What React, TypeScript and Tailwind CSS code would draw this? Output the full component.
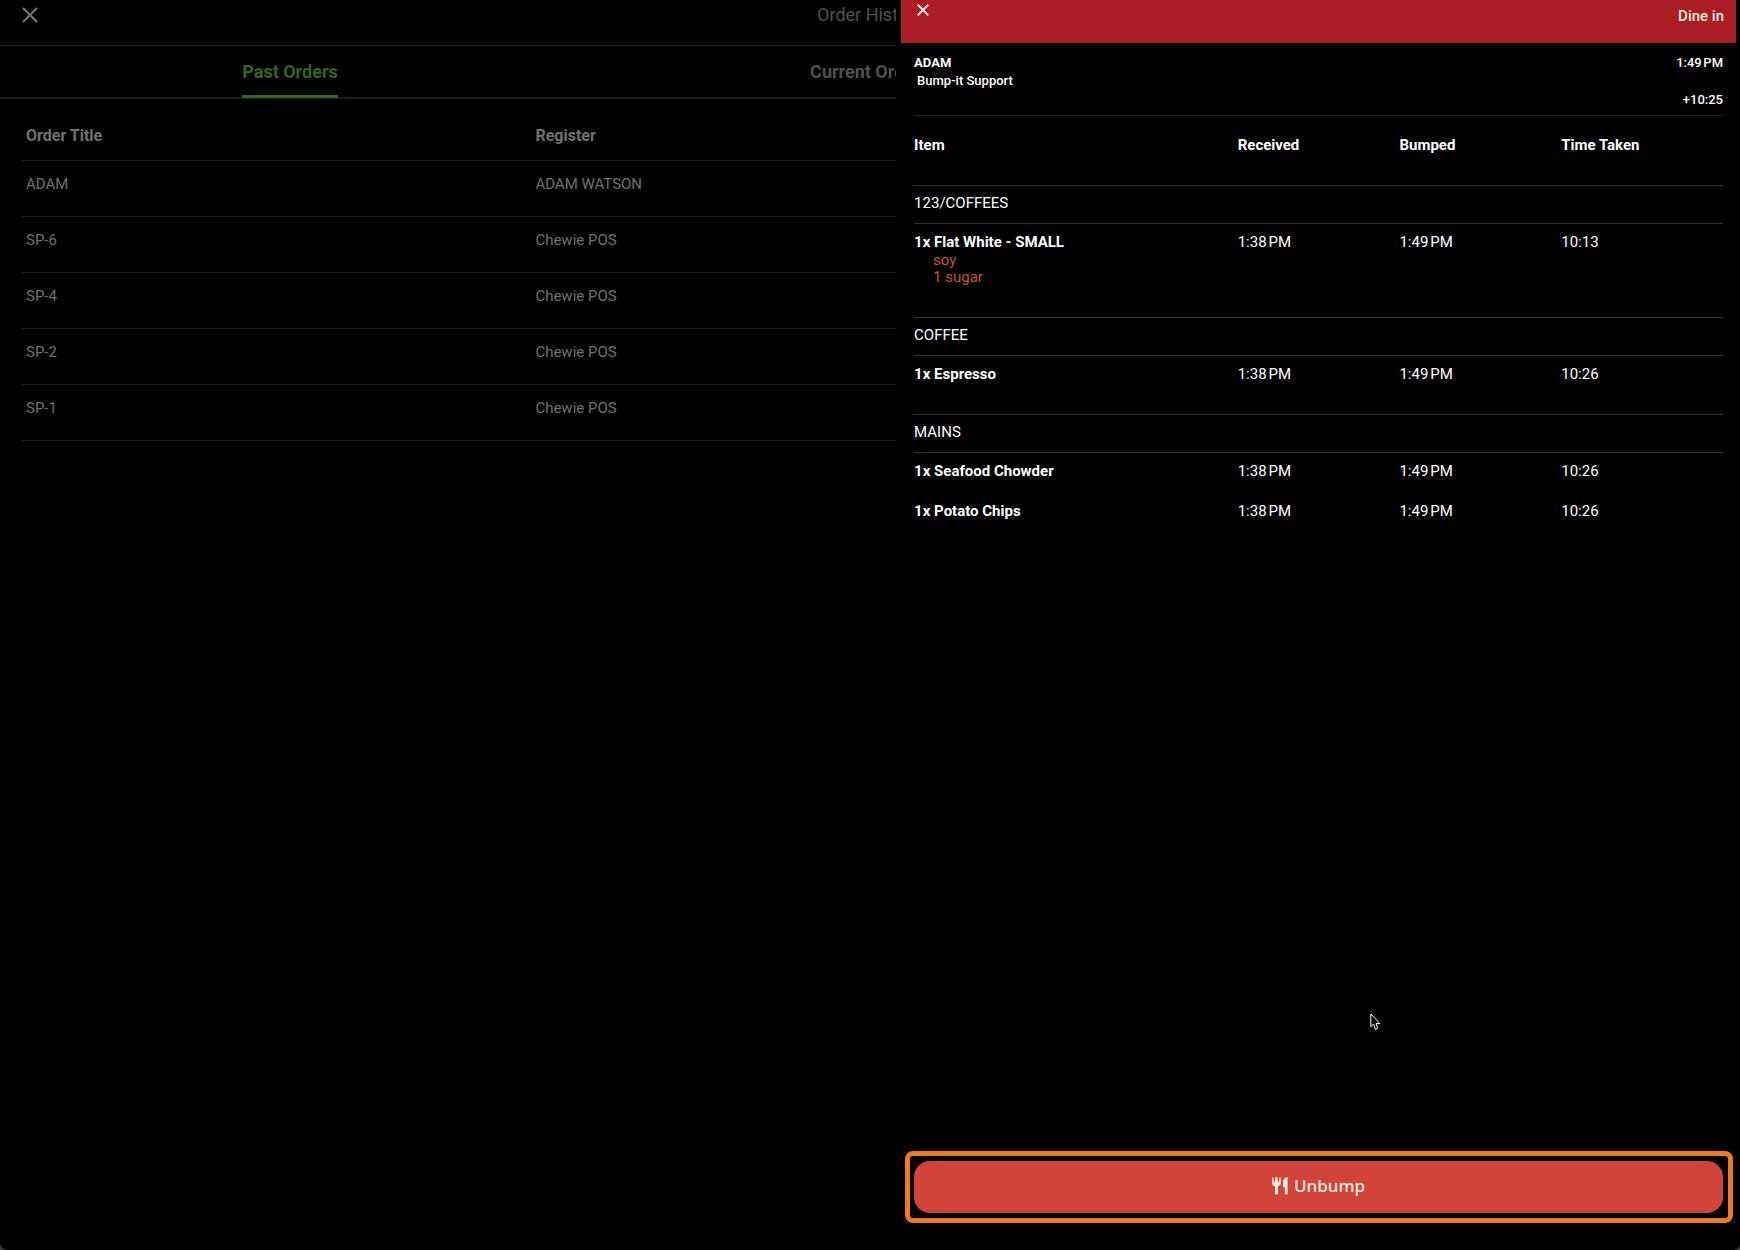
import React from "react";

type Item = { name: string; notes?: string[]; received: string; bumped: string; taken: string };
type Section = { title: string; items: Item[] };

const orders = [
  { title: "ADAM", register: "ADAM WATSON" },
  { title: "SP-6", register: "Chewie POS" },
  { title: "SP-4", register: "Chewie POS" },
  { title: "SP-2", register: "Chewie POS" },
  { title: "SP-1", register: "Chewie POS" },
];

const RECEIVED = "1:38\u202fPM";
const BUMPED = "1:49\u202fPM";

const sections: Section[] = [
  {
    title: "123/COFFEES",
    items: [
      { name: "1x Flat White - SMALL", notes: ["soy", "1 sugar"], received: RECEIVED, bumped: BUMPED, taken: "10:13" },
    ],
  },
  { title: "COFFEE", items: [{ name: "1x Espresso", received: RECEIVED, bumped: BUMPED, taken: "10:26" }] },
  {
    title: "MAINS",
    items: [
      { name: "1x Seafood Chowder", received: RECEIVED, bumped: BUMPED, taken: "10:26" },
      { name: "1x Potato Chips", received: RECEIVED, bumped: BUMPED, taken: "10:26" },
    ],
  },
];

function CloseIcon({ className }: { className: string }) {
  return (
    <svg viewBox="0 0 16 16" className={className} fill="none" stroke="currentColor" strokeWidth="2.4" aria-hidden="true">
      <path d="M1 1 15 15M15 1 1 15" />
    </svg>
  );
}

function CutleryIcon() {
  return (
    <svg viewBox="0 0 16 18" className="h-[18px] w-4" fill="currentColor" aria-hidden="true">
      <path d="M0 .6Q.7 0 1.3.6L1.8 5.6H2.6L3.2.6Q4.4 0 5.5.6L6 5.6H6.8L7.4.6Q8.2 0 8.8.6V6.6Q8.8 8.6 6 9.4V17Q4.5 18 3 17V9.4Q0 8.6 0 6.6Z" />
      <path d="M15.6 0V17Q14.2 18 12.8 17V10.2H11Q10.4 3 13 .9Q14.3 0 15.6 0Z" />
    </svg>
  );
}

function OrderHistory() {
  return (
    <main className="min-h-screen text-[#707070]">
      <header className="relative flex h-[46px] items-start justify-center border-b border-[#1c1c1c] pt-[5px]">
        <button type="button" aria-label="Close order history" className="absolute top-[7px] left-[22px]">
          <CloseIcon className="size-4" />
        </button>
        <h1 className="text-lg leading-5 text-[#505050]">Order History</h1>
      </header>
      <nav className="grid h-[53px] grid-cols-3 justify-items-center border-b-2 border-[#1c1c1c] text-lg font-bold">
        <button type="button" className="-mb-px border-b-[3px] border-[#2f6620] pt-0.5 text-[#2f6620]">
          Past Orders
        </button>
        <button type="button" className="-mb-px border-b-[3px] border-transparent pt-0.5 text-[#505050]">
          Current Orders
        </button>
      </nav>
      <div className="px-[21px] pt-5">
        <table className="w-full table-fixed text-left">
          <thead>
            <tr className="h-[41px] border-b border-[#1e1e1e] align-top text-base leading-6">
              <th className="w-[30%] px-[5px] pt-[5px] font-bold">Order Title</th>
              <th className="px-[5px] pt-[5px] font-bold">Register</th>
            </tr>
          </thead>
          <tbody>
            {orders.map((o) => (
              <tr key={o.title} className="h-14 border-b border-[#1e1e1e] align-top text-[15px] leading-5">
                <td className="px-[5px] pt-[13px]">{o.title}</td>
                <td className="px-[5px] pt-[13px]">{o.register}</td>
              </tr>
            ))}
          </tbody>
        </table>
      </div>
    </main>
  );
}

function OrderDrawer() {
  return (
    <aside className="absolute inset-y-0 right-0 flex w-[48.5%] flex-col bg-black pr-1 pl-[5px] text-white">
      <header className="flex h-[43px] items-start justify-between bg-[#ab1d25] pr-3 pl-4 text-[#ffeedd]">
        <button type="button" aria-label="Close order" className="pt-1">
          <CloseIcon className="size-3" />
        </button>
        <span className="pt-1.5 text-[15px] leading-5 font-medium">Dine in</span>
      </header>
      <div className="mx-[13px] flex h-[73px] justify-between border-b border-[#1e1e1e] pt-[11px] text-[13px] leading-[18px] font-medium">
        <div>
          <p className="font-bold">ADAM</p>
          <p className="pl-[3px]">Bump-it Support</p>
        </div>
        <div className="flex flex-col justify-between pb-1.5 text-right">
          <p>{BUMPED}</p>
          <p>+10:25</p>
        </div>
      </div>
      <div className="mx-[13px] flex-1">
        <table className="w-full table-fixed text-left text-[15px] leading-5">
          <thead>
            <tr className="h-[69px] align-top">
              <th className="w-[40%] pt-[19px] font-bold">Item</th>
              <th className="w-[20%] pt-[19px] font-bold">Received</th>
              <th className="w-[20%] pt-[19px] font-bold">Bumped</th>
              <th className="w-[20%] pt-[19px] font-bold">Time Taken</th>
            </tr>
          </thead>
          {sections.map((s) => (
            <tbody key={s.title}>
              <tr className="h-[38px] border-y border-[#303030] align-top">
                <th colSpan={4} scope="rowgroup" className="pt-[7px] font-normal">
                  {s.title}
                </th>
              </tr>
              {s.items.map((it) => (
                <tr key={it.name} className="h-[41px] align-top last:h-[59px]">
                  <td className="pt-2">
                    <p className="font-bold">{it.name}</p>
                    {it.notes && (
                      <ul className="pb-[31px] pl-[19px] leading-[17px] text-[#c4542e]">
                        {it.notes.map((n) => (
                          <li key={n}>{n}</li>
                        ))}
                      </ul>
                    )}
                  </td>
                  <td className="pt-2">{it.received}</td>
                  <td className="pt-2">{it.bumped}</td>
                  <td className="pt-2">{it.taken}</td>
                </tr>
              ))}
            </tbody>
          ))}
        </table>
      </div>
      <div className="mr-[3px] mb-[27px] ml-1 rounded-lg border-[5px] border-[#ec7c1c] py-[5px] pr-[5px] pl-1">
        <button
          type="button"
          className="flex h-[52px] w-full items-center justify-center gap-1.5 rounded-2xl bg-[#d24439] pb-0.5 font-['Noto_Sans',sans-serif] text-[17px] font-medium text-[#ffeedd]"
        >
          <CutleryIcon />
          Unbump
        </button>
      </div>
    </aside>
  );
}

export default function App() {
  return (
    <div className="bg-[#3a3a3a]">
      <div className="relative min-h-screen overflow-hidden rounded-b-lg border-b border-[#3a3a3a] bg-black font-[Roboto,sans-serif]">
        <OrderHistory />
        <OrderDrawer />
        <svg
          viewBox="0 0 11 18"
          className="absolute top-[1013px] left-[1370px] h-[18px] w-[11px]"
          fill="#000"
          stroke="#fff"
          strokeWidth="1"
          aria-hidden="true"
        >
          <path d="M.8 1V13.6L3.6 11.2 5.4 16.4 7.6 15.4 6 10.6H10Z" />
        </svg>
      </div>
    </div>
  );
}
